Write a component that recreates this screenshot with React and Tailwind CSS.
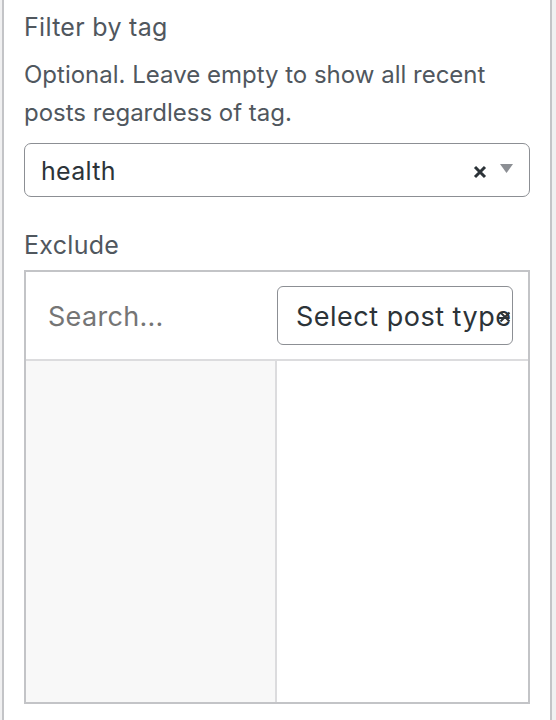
export default function App() {
  return (
    <div className="w-[556px] h-[720px] bg-[#f0f0f1] flex" style={{ fontFamily: "Inter, 'Liberation Sans', sans-serif" }}>
      <div className="ml-[2px] w-[550px] h-full bg-white border-x-2 border-[#c3c4c7] px-[20px]">
        <div className="pt-[11px] text-[25px] leading-[32px] tracking-[0.3px] text-[#50575e]">Filter by tag</div>
        <div className="mt-[13px] text-[24px] leading-[38px] text-[#50575e]">
          Optional. Leave empty to show all recent posts regardless of tag.
        </div>
        <div className="mt-[11px] h-[54px] rounded-[7px] border-[1.5px] border-[#8c8f94] flex items-center pl-[16px] pr-[16px]">
          <span className="flex-1 pt-[4px] text-[25px] tracking-[0.3px] text-[#2c3338]">health</span>
          <svg width="14" height="14" viewBox="0 0 14 14" className="mr-[13px] mt-[4px]">
            <path d="M2 2 L12 12 M12 2 L2 12" stroke="#2c3338" strokeWidth="3" strokeLinecap="butt" />
          </svg>
          <svg width="13" height="9" viewBox="0 0 13 9" className="mb-[3px]">
            <path d="M0 0 H13 L6.5 9 Z" fill="#8c8f94" />
          </svg>
        </div>
        <div className="mt-[32px] text-[25px] leading-[32px] tracking-[0.3px] text-[#50575e]">Exclude</div>
        <div className="mt-[9px] h-[434px] border-2 border-[#c3c4c7] flex flex-col">
          <div className="h-[89px] border-b-2 border-[#dcdcde] flex items-center">
            <div className="w-[251px] pl-[22px] pt-[3px] text-[27px] tracking-[0.3px] text-[#757575]">Search...</div>
            <div className="relative w-[236px] h-[59px] rounded-[6px] border-[1.5px] border-[#8c8f94] flex items-center pl-[18px] pt-[3px] overflow-hidden">
              <span className="whitespace-nowrap text-[27px] tracking-[0.5px] text-[#2c3338]">Select post type</span>
              <svg width="12" height="12" viewBox="0 0 12 12" className="absolute right-[1px] top-[24px]">
                <path d="M1.5 1.5 L10.5 10.5 M10.5 1.5 L1.5 10.5" stroke="#2c3338" strokeWidth="2" />
              </svg>
            </div>
          </div>
          <div className="flex-1 flex">
            <div className="w-[251px] bg-[#f8f8f8] border-r-2 border-[#dcdcde]"></div>
            <div className="flex-1 bg-white"></div>
          </div>
        </div>
      </div>
    </div>
  );
}
